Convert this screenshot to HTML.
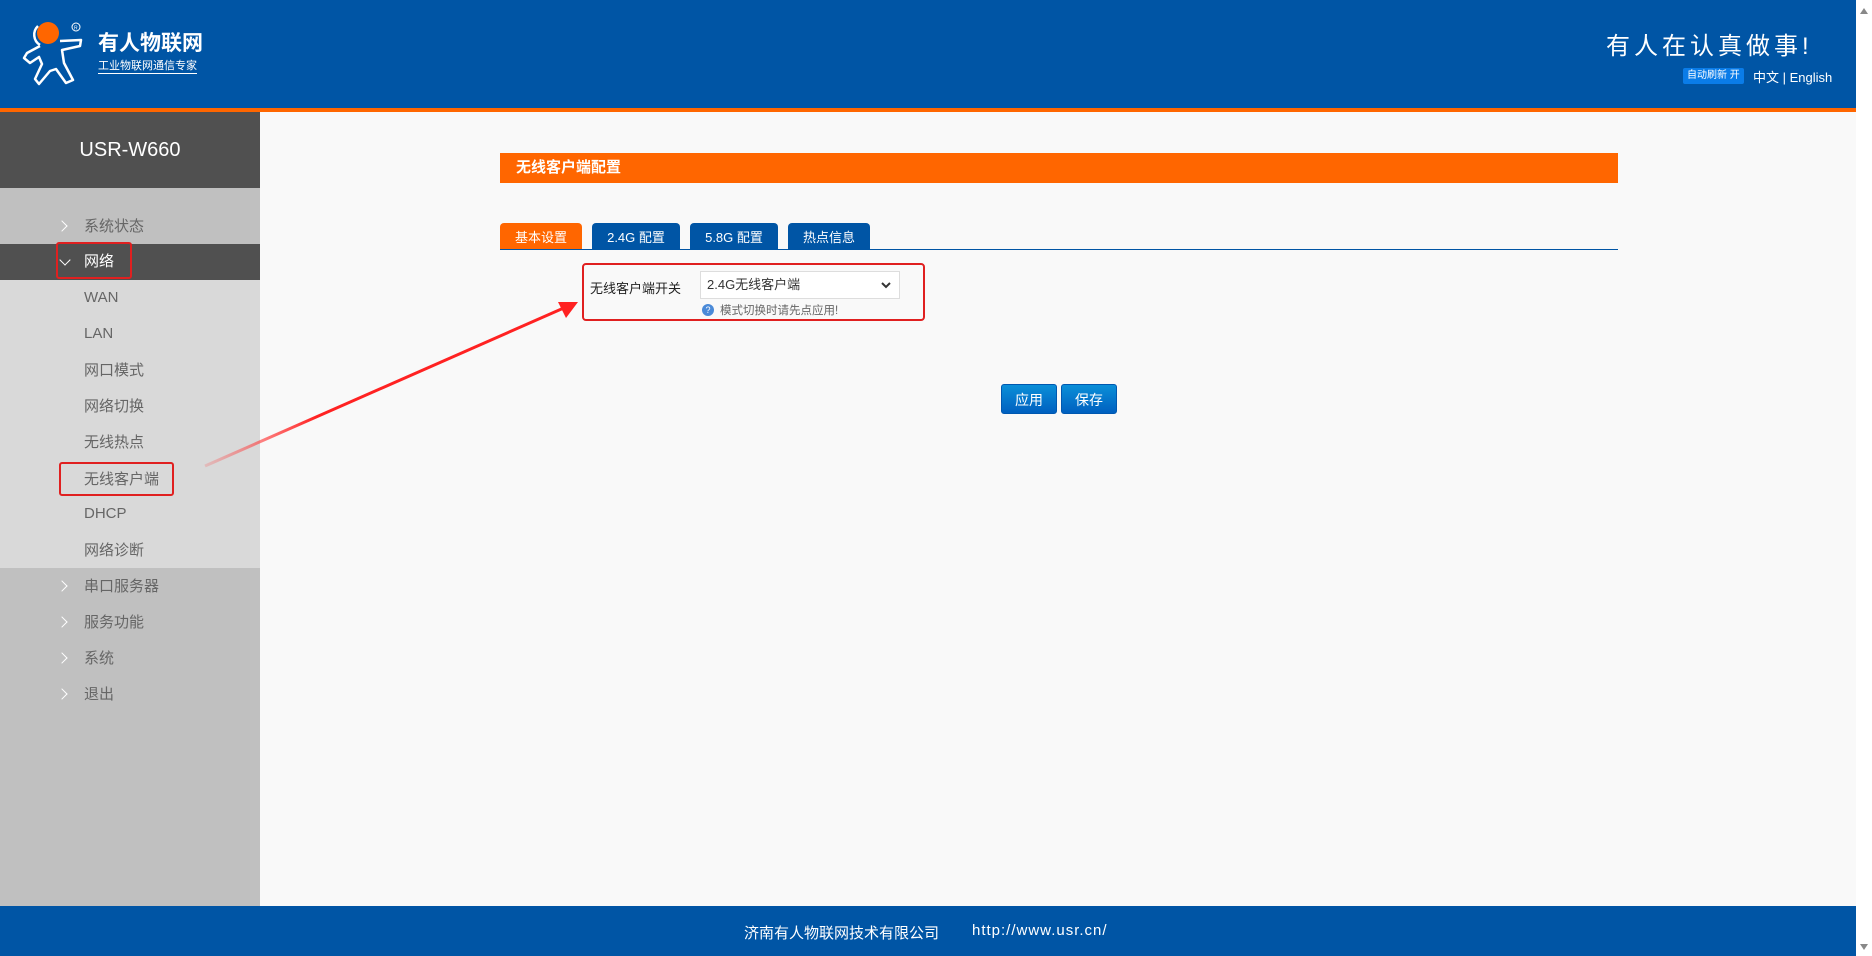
<!DOCTYPE html>
<html><head><meta charset="utf-8"><style>
*{margin:0;padding:0;box-sizing:border-box}
body{width:1872px;height:956px;overflow:hidden;background:#f9f9f9;font-family:"Liberation Sans","Noto Sans CJK SC",sans-serif;position:relative}
.a{position:absolute}
.hdr{left:0;top:0;width:1856px;height:108px;background:#0055a5}
.ol{left:0;top:108px;width:1856px;height:4px;background:#ff6600}
.side{left:0;top:112px;width:260px;height:794px;background:#c0c0c0}
.it{position:absolute;left:84px;font-size:15px;color:#666;line-height:20px}
.ch{position:absolute;left:60px;width:8px;height:8px;border-right:1.5px solid #fff;border-top:1.5px solid #fff;transform:rotate(45deg)}
.foot{left:0;top:906px;width:1856px;height:50px;background:#0055a5;color:#fff;font-size:15px}
.tab{position:absolute;top:223px;height:27px;color:#fff;font-size:13px;text-align:center;line-height:29px;border-radius:4px 4px 0 0;background:#0055a5}
.btn{position:absolute;top:384px;width:56px;height:30px;border-radius:3px;background:linear-gradient(#0a8fd8,#0060c0);color:#fff;font-size:14px;text-align:center;line-height:30px;border:1px solid #0058b0}
</style></head><body>
<div class="a hdr"></div>
<svg class="a" style="left:0;top:0" width="100" height="100" viewBox="0 0 100 100">
<path d="M38 26 A12 12 0 0 0 40 45" fill="none" stroke="#fff" stroke-width="2.5"/>
<circle cx="48" cy="33" r="11" fill="#ff6600"/>
<path d="M40 46 L27 53 L24 58 L30 63 L39 57 L42 64 L35 79 L39 84 L50 71 L56 69 L66 83 L73 80 L64 63 L62 50 L80 46 L81 40 L60 41" fill="none" stroke="#fff" stroke-width="2.5" stroke-linejoin="round"/>
<circle cx="76" cy="27" r="4" fill="none" stroke="#fff" stroke-width="1"/>
<text x="74" y="29.5" font-size="5" fill="#fff" font-family="Liberation Sans">R</text>
</svg>
<div class="a" style="left:98px;top:27px;color:#fff;font-size:21px;font-weight:bold">有人物联网</div>
<div class="a" style="left:98px;top:60px;color:#fff;font-size:11px;border-bottom:1px solid #fff;line-height:13px">工业物联网通信专家</div>
<div class="a" style="left:1606px;top:26px;color:#fff;font-size:24px;letter-spacing:4px">有人在认真做事!</div>
<div class="a" style="left:1683px;top:68px;background:#0a7ce8;color:#fff;font-size:10px;padding:1px 4px;border-radius:2px;line-height:14px">自动刷新 开</div>
<div class="a" style="left:1753px;top:67px;color:#fff;font-size:13px">中文 | English</div>
<div class="a ol"></div>
<div class="a" style="left:1856px;top:0;width:16px;height:956px;background:#fff"></div>
<div class="a" style="left:1860px;top:8px;width:0;height:0;border-left:4px solid transparent;border-right:4px solid transparent;border-bottom:6px solid #888"></div>
<div class="a" style="left:1860px;top:944px;width:0;height:0;border-left:4px solid transparent;border-right:4px solid transparent;border-top:6px solid #888"></div>
<div class="a side">
<div class="a" style="left:0;top:0;width:260px;height:76px;background:#505050;color:#fff;font-size:20px;text-align:center;line-height:76px">USR-W660</div>
<div class="a" style="left:0;top:132px;width:260px;height:36px;background:#505050"></div>
<div class="a" style="left:0;top:168px;width:260px;height:288px;background:#d9d9d9"></div>
</div>
<div class="ch" style="top:222px;left:58px"></div><div class="it" style="top:217px">系统状态</div>
<div class="ch" style="top:256px;left:61px;transform:rotate(135deg)"></div><div class="it" style="top:252px;color:#fff">网络</div>
<div class="it" style="top:288px">WAN</div>
<div class="it" style="top:324px">LAN</div>
<div class="it" style="top:361px">网口模式</div>
<div class="it" style="top:397px">网络切换</div>
<div class="it" style="top:433px">无线热点</div>
<div class="it" style="top:470px">无线客户端</div>
<div class="it" style="top:504px">DHCP</div>
<div class="it" style="top:541px">网络诊断</div>
<div class="ch" style="top:582px;left:58px"></div><div class="it" style="top:577px">串口服务器</div>
<div class="ch" style="top:618px;left:58px"></div><div class="it" style="top:613px">服务功能</div>
<div class="ch" style="top:654px;left:58px"></div><div class="it" style="top:649px">系统</div>
<div class="ch" style="top:690px;left:58px"></div><div class="it" style="top:685px">退出</div>
<div class="a" style="left:56px;top:242px;width:76px;height:37px;border:2px solid #e02020;border-radius:3px"></div>
<div class="a" style="left:59px;top:462px;width:115px;height:34px;border:2px solid #e02020;border-radius:3px"></div>
<div class="a" style="left:500px;top:153px;width:1118px;height:30px;background:#ff6600;color:#fff;font-size:15px;font-weight:bold;line-height:30px;padding-left:16px">无线客户端配置</div>
<div class="tab" style="left:500px;width:82px;background:#ff6600">基本设置</div>
<div class="tab" style="left:592px;width:88px">2.4G 配置</div>
<div class="tab" style="left:690px;width:88px">5.8G 配置</div>
<div class="tab" style="left:788px;width:82px">热点信息</div>
<div class="a" style="left:500px;top:249px;width:1118px;height:1px;background:#0055a5"></div>
<div class="a" style="left:582px;top:263px;width:343px;height:58px;border:2px solid #e02020;border-radius:4px"></div>
<div class="a" style="left:590px;top:278px;font-size:13px;color:#222">无线客户端开关</div>
<div class="a" style="left:700px;top:271px;width:200px;height:28px;border:1px solid #ddd;background:#fff;font-size:13px;color:#333;line-height:26px;padding-left:6px">2.4G无线客户端
<svg style="position:absolute;right:8px;top:10px" width="10" height="7"><path d="M1 1 L5 5 L9 1" fill="none" stroke="#333" stroke-width="2"/></svg></div>
<div class="a" style="left:702px;top:304px;width:12px;height:12px;border-radius:6px;background:#4a8ad8;color:#fff;font-size:9px;text-align:center;line-height:12px">?</div>
<div class="a" style="left:720px;top:302px;font-size:11.5px;color:#666">模式切换时请先点应用!</div>
<div class="btn" style="left:1001px">应用</div>
<div class="btn" style="left:1061px">保存</div>
<svg class="a" style="left:0;top:0" width="1872" height="956"><defs><linearGradient id="g" x1="205" y1="466" x2="577" y2="302" gradientUnits="userSpaceOnUse"><stop offset="0" stop-color="#f44" stop-opacity="0.2"/><stop offset="0.3" stop-color="#f22"/></linearGradient></defs>
<path d="M205 466 L566 307" stroke="url(#g)" stroke-width="3"/>
<path d="M578 302 L558 302 L566 318 Z" fill="#f22"/></svg>
<div class="a foot"><span class="a" style="left:744px;top:16px">济南有人物联网技术有限公司</span><span class="a" style="left:972px;top:16px;letter-spacing:1px">http://www.usr.cn/</span></div>
</body></html>
